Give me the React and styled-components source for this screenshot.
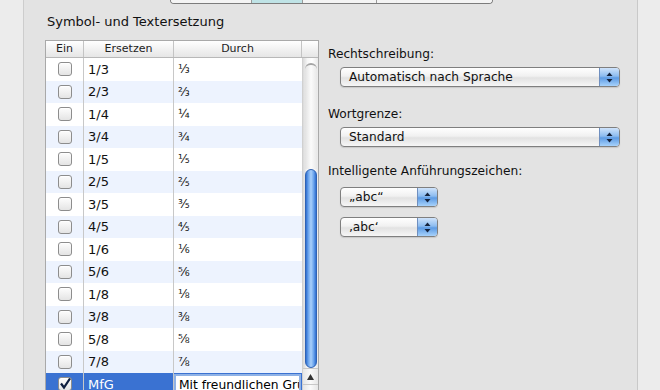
import styled, { createGlobalStyle } from "styled-components";

const GlobalStyle = createGlobalStyle`
  html, body {
    margin: 0;
    padding: 0;
    background: #ececec;
    font-family: "DejaVu Sans", "Liberation Sans", sans-serif;
    overflow: hidden;
  }
`;

const rows = [
  ["1/3", "⅓"],
  ["2/3", "⅔"],
  ["1/4", "¼"],
  ["3/4", "¾"],
  ["1/5", "⅕"],
  ["2/5", "⅖"],
  ["3/5", "⅗"],
  ["4/5", "⅘"],
  ["1/6", "⅙"],
  ["5/6", "⅚"],
  ["1/8", "⅛"],
  ["3/8", "⅜"],
  ["5/8", "⅝"],
  ["7/8", "⅞"],
];

const Page = styled.div`
  display: flex;
  width: 660px;
  height: 390px;
  overflow: hidden;
`;

const Gutter = styled.div`
  width: ${({ width }) => width}px;
  flex: none;
  background: #ececec;
`;

const Panel = styled.div`
  flex: 1;
  background: #e3e3e3;
  border-left: 1px solid #cdcdcd;
  border-right: 1px solid #c9c9c9;
  padding-left: 21px;
  overflow: hidden;
`;

const Segmented = styled.div`
  display: flex;
  width: 321px;
  height: 3px;
  margin-left: 125px;
  border: 1px solid #7c7c7c;
  border-top: none;
  border-radius: 0 0 5px 5px;
  background: #f4f4f4;
  overflow: hidden;
`;

const Segment = styled.div`
  width: ${({ width }) => width}px;
  flex: none;
  background: ${({ active }) => (active ? "#bfe3e6" : "#f4f4f4")};
  border-right: 1px solid #9a9a9a;
  &:last-child {
    border-right: none;
    flex: 1;
  }
`;

const Title = styled.div`
  margin: 8px 0 0 2px;
  height: 20px;
  line-height: 20px;
  font-size: 13px;
  color: #111;
`;

const Body = styled.div`
  display: flex;
  margin-top: 8px;
`;

const Table = styled.div`
  width: 272px;
  flex: none;
  border: 1px solid #a9a9a9;
  border-bottom: none;
  background: #fff;
`;

const HeaderRow = styled.div`
  display: grid;
  grid-template-columns: 38px 90px 128px 1fr;
  height: 16px;
  border-bottom: 1px solid #b8b8b8;
  background: linear-gradient(#ffffff, #f2f2f2 50%, #e6e6e6);
`;

const HeaderCell = styled.div`
  font-size: 11px;
  line-height: 16px;
  text-align: center;
  color: #222;
  border-right: 1px solid #c4c4c4;
  &:last-child {
    border-right: none;
  }
`;

const TableBody = styled.div`
  display: flex;
`;

const RowList = styled.div`
  width: 256px;
  flex: none;
`;

const Row = styled.div`
  display: grid;
  grid-template-columns: 38px 90px 1fr;
  height: 22.5px;
  background: ${({ selected, alt }) =>
    selected ? "#3a72d2" : alt ? "#edf3fe" : "#ffffff"};
  color: ${({ selected }) => (selected ? "#fff" : "#111")};
`;

const Cell = styled.div`
  display: flex;
  align-items: center;
  justify-content: ${({ center }) => (center ? "center" : "flex-start")};
  padding-left: ${({ center }) => (center ? 0 : 4)}px;
  font-size: ${({ small }) => (small ? 12 : 13)}px;
  border-right: ${({ divider }) => (divider ? "1px solid #c8c8c8" : "none")};
  overflow: hidden;
  white-space: nowrap;
`;

const Check = styled.div`
  width: 12px;
  height: 12px;
  border: 1px solid #8d8d8d;
  border-radius: 3px;
  background: linear-gradient(#fdfdfd, #e4e4e4);
  box-shadow: inset 0 1px 1px rgba(255, 255, 255, 0.9);
  display: flex;
  align-items: center;
  justify-content: center;
`;

const EditField = styled.div`
  align-self: stretch;
  margin: 1px 1px 0 0;
  padding-left: 3px;
  background: #fff;
  color: #000;
  border: 2px solid #8fb2e6;
  border-bottom: none;
  font-size: 12.3px;
  line-height: 18px;
  white-space: nowrap;
  overflow: hidden;
`;

const Scrollbar = styled.div`
  flex: 1;
  display: flex;
  flex-direction: column;
  align-items: center;
  background: linear-gradient(90deg, #d9d9d9, #f7f7f7 30%, #ffffff 60%, #e9e9e9);
  border-left: 1px solid #d0d0d0;
`;

const TrackCap = styled.div`
  width: 12px;
  height: 104px;
  margin-top: 5px;
  border-radius: 6px 6px 0 0;
  border-top: 2px solid #a5a5a5;
  background: linear-gradient(90deg, #e2e2e2, #fbfbfb 50%, #e8e8e8);
`;

const Thumb = styled.div`
  width: 12px;
  height: 199px;
  flex: none;
  border-radius: 7px;
  border: 1px solid #2f62b4;
  box-sizing: border-box;
  background: linear-gradient(
    90deg,
    #2f6fd0,
    #6fa7ee 25%,
    #a9d0fb 50%,
    #6fa7ee 75%,
    #2f6fd0
  );
`;

const ArrowButton = styled.div`
  width: 100%;
  height: 15px;
  flex: none;
  display: flex;
  align-items: center;
  justify-content: center;
  border-top: 1px solid #c8c8c8;
  background: linear-gradient(90deg, #e6e6e6, #fafafa 50%, #e6e6e6);
`;

const Options = styled.div`
  display: flex;
  flex-direction: column;
  padding: 6px 0 0 9px;
`;

const Label = styled.div`
  font-size: 12.2px;
  line-height: 16px;
  color: #111;
  margin-top: ${({ top }) => top}px;
`;

const Popup = styled.div`
  display: flex;
  width: ${({ width }) => width}px;
  height: 20px;
  box-sizing: border-box;
  margin: ${({ top }) => top}px 0 0 12px;
  border: 1px solid #7f7f7f;
  border-radius: 4px;
  overflow: hidden;
  background: linear-gradient(#ffffff, #f1f1f1 45%, #e2e2e2 55%, #f6f6f6);
  box-shadow: 0 1px 1px rgba(0, 0, 0, 0.12);
`;

const PopupText = styled.div`
  flex: 1;
  padding-left: 8px;
  font-size: 12.2px;
  line-height: 18px;
  color: #111;
  white-space: nowrap;
`;

const PopupArrows = styled.div`
  width: 19px;
  flex: none;
  border-left: 1px solid #6f8fbf;
  display: flex;
  align-items: center;
  justify-content: center;
  background: linear-gradient(#cfe3fb, #8cbcf0 45%, #5d9be4 55%, #a7d2fb);
`;

const Arrows = () => (
  <svg width="7" height="11" viewBox="0 0 7 11">
    <path d="M3.5 0.5 L6.5 4 L0.5 4 Z" fill="#15233d" />
    <path d="M3.5 10.5 L6.5 7 L0.5 7 Z" fill="#15233d" />
  </svg>
);

const PopupButton = ({ width, top, children }) => (
  <Popup width={width} top={top}>
    <PopupText>{children}</PopupText>
    <PopupArrows>
      <Arrows />
    </PopupArrows>
  </Popup>
);

const CheckMark = () => (
  <svg width="12" height="12" viewBox="0 0 12 12">
    <path
      d="M2 5.5 L5 9.5 L11 0.5"
      stroke="#0d1e3e"
      strokeWidth="2.2"
      fill="none"
    />
  </svg>
);

export default function App() {
  return (
    <>
      <GlobalStyle />
      <Page>
        <Gutter width={23} />
        <Panel>
          <Segmented>
            <Segment width={80} />
            <Segment width={50} active />
            <Segment width={73} />
            <Segment />
          </Segmented>
          <Title>Symbol- und Textersetzung</Title>
          <Body>
            <Table>
              <HeaderRow>
                <HeaderCell>Ein</HeaderCell>
                <HeaderCell>Ersetzen</HeaderCell>
                <HeaderCell>Durch</HeaderCell>
                <HeaderCell />
              </HeaderRow>
              <TableBody>
                <RowList>
                  {rows.map(([from, to], i) => (
                    <Row key={from} alt={i % 2 === 1}>
                      <Cell center divider>
                        <Check />
                      </Cell>
                      <Cell divider>{from}</Cell>
                      <Cell small>{to}</Cell>
                    </Row>
                  ))}
                  <Row selected>
                    <Cell center divider>
                      <Check>
                        <CheckMark />
                      </Check>
                    </Cell>
                    <Cell divider>MfG</Cell>
                    <EditField>Mit freundlichen Grüßen</EditField>
                  </Row>
                </RowList>
                <Scrollbar>
                  <TrackCap />
                  <Thumb />
                  <ArrowButton>
                    <svg width="7" height="6" viewBox="0 0 7 6">
                      <path d="M3.5 0 L7 6 L0 6 Z" fill="#333" />
                    </svg>
                  </ArrowButton>
                  <ArrowButton>
                    <svg width="7" height="6" viewBox="0 0 7 6">
                      <path d="M3.5 6 L7 0 L0 0 Z" fill="#333" />
                    </svg>
                  </ArrowButton>
                </Scrollbar>
              </TableBody>
            </Table>
            <Options>
              <Label top={0}>Rechtschreibung:</Label>
              <PopupButton width={280} top={5}>
                Automatisch nach Sprache
              </PopupButton>
              <Label top={19}>Wortgrenze:</Label>
              <PopupButton width={280} top={5}>
                Standard
              </PopupButton>
              <Label top={16}>Intelligente Anführungszeichen:</Label>
              <PopupButton width={98} top={8}>
                „abc“
              </PopupButton>
              <PopupButton width={98} top={10}>
                ‚abc‘
              </PopupButton>
            </Options>
          </Body>
        </Panel>
        <Gutter width={22} />
      </Page>
    </>
  );
}
